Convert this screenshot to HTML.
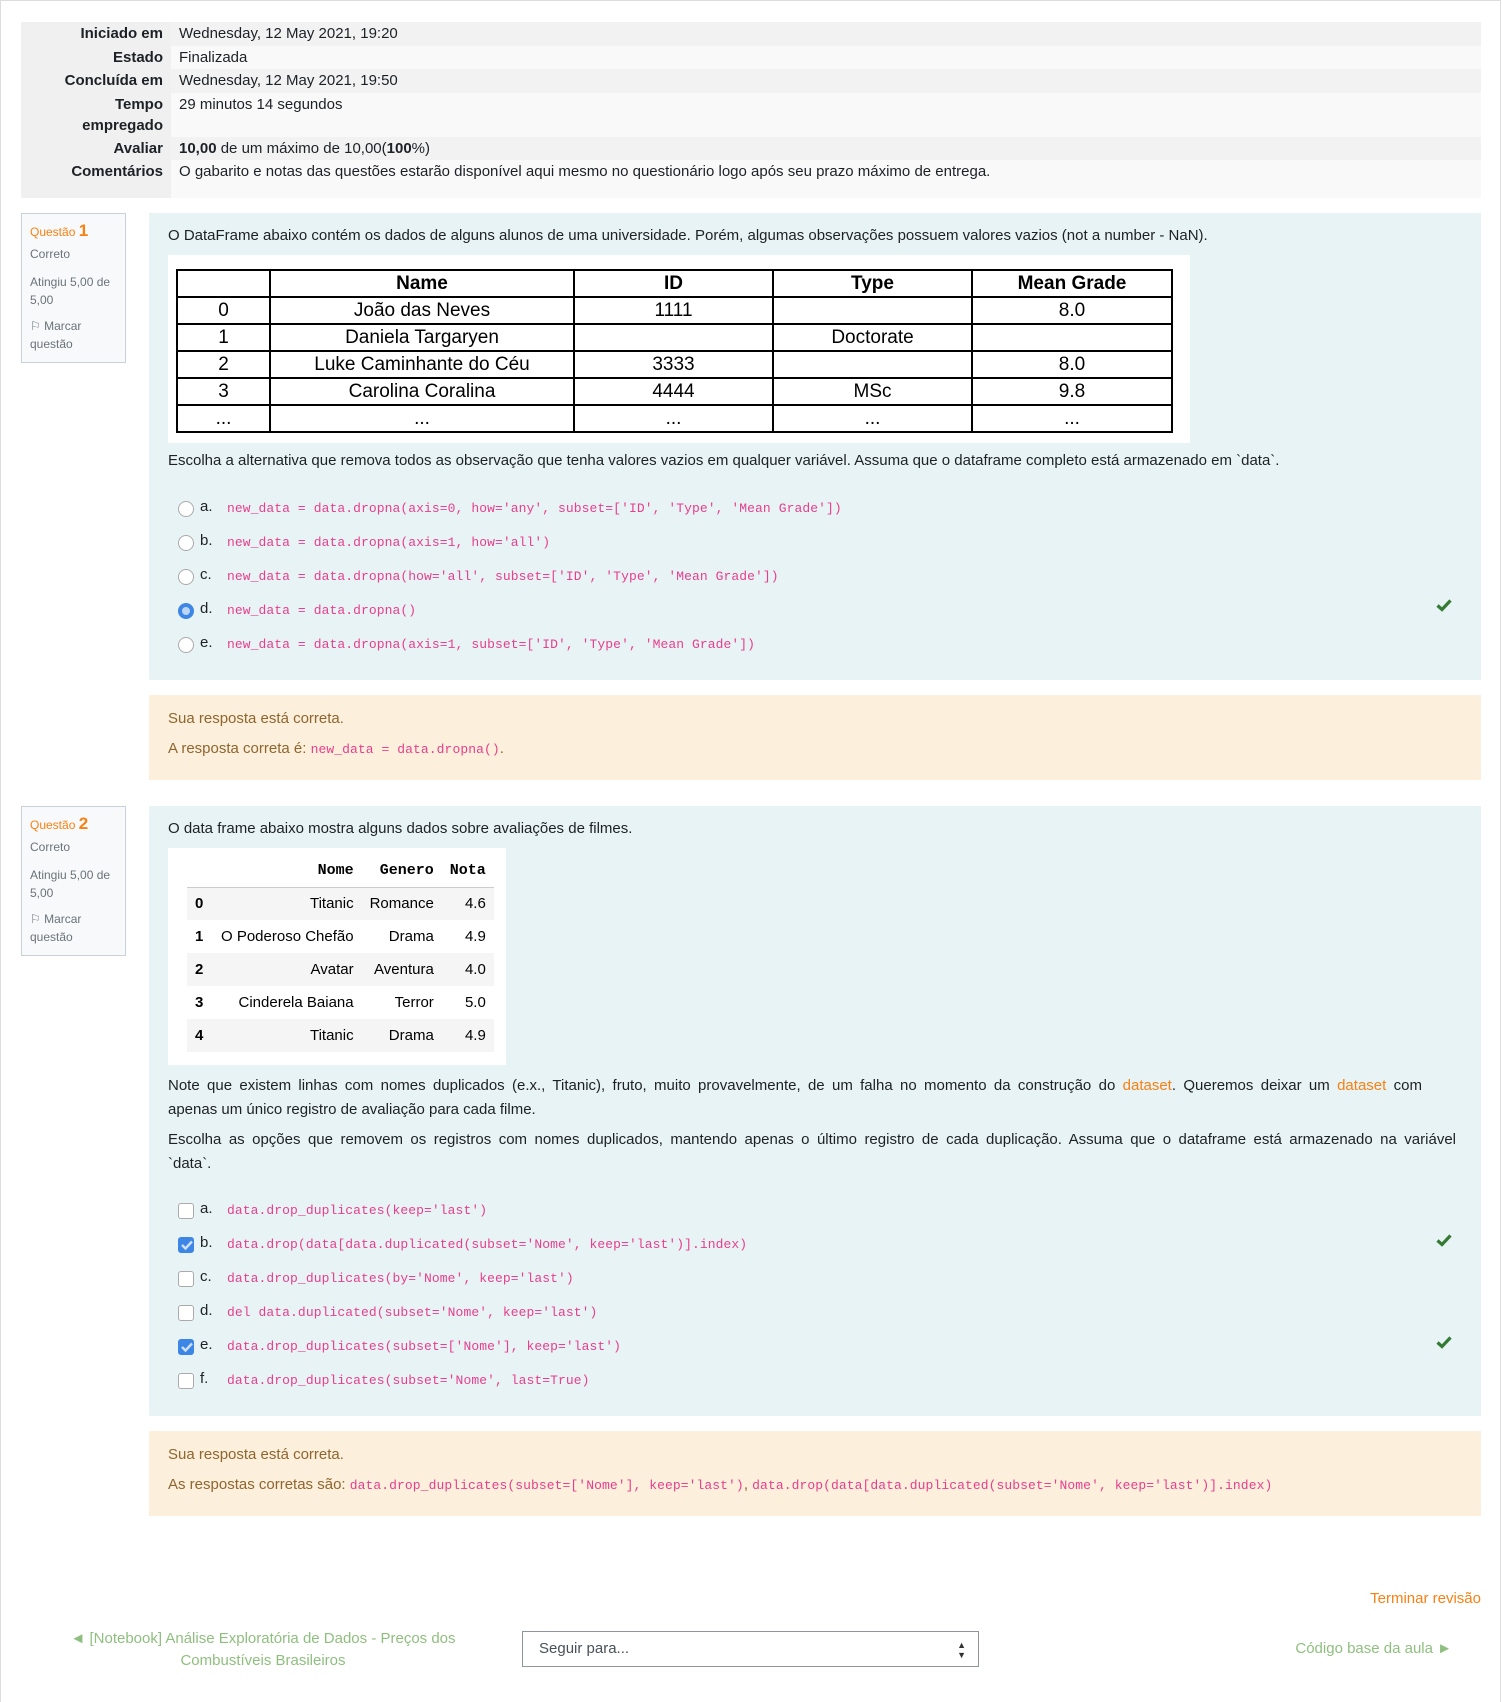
<!DOCTYPE html>
<html><head><meta charset="utf-8"><style>
*{box-sizing:border-box;margin:0;padding:0}
body{width:1502px;height:1702px;background:#fff;font-family:"Liberation Sans",sans-serif;font-size:15px;color:#1d2125;position:relative;overflow:hidden}
.frame{position:absolute;left:0;top:0;width:1501px;height:1702px;border:1px solid #ddd;border-bottom:none}
.abs{position:absolute}
table.sum{position:absolute;left:21px;top:22px;width:1460px;border-collapse:collapse}
table.sum th{width:150px;text-align:right;font-weight:bold;padding:1px 8px 0 0;vertical-align:top;background:#f0f0f0;line-height:21.5px}
table.sum td{padding:1px 8px;vertical-align:top;line-height:21.5px}
table.sum tr:nth-child(odd) td{background:#f2f2f2}
table.sum tr:nth-child(even) td{background:#f9f9f9}
.info{position:absolute;left:21px;width:105px;height:150px;background:#f8f9fa;border:1px solid #cad0d7;padding:8px 8px;font-size:12px;color:#6a737b;line-height:18px}
.info .q{color:#f98012;font-size:12px}
.info .q b{font-size:17px}
.content{position:absolute;left:149px;width:1332px;background:#e7f3f5}
.fb{position:absolute;left:149px;width:1332px;background:#fcefdc;color:#8e662e;padding:14px 19px}
.fb p{line-height:20px;margin-bottom:10px}
code,.code{font-family:"Liberation Mono",monospace;font-size:13px;color:#e83e8c;letter-spacing:0.08px}
.opt{position:absolute;left:176px;height:20px;line-height:20px}
.opt .r{position:absolute;left:2px;top:3px;width:16px;height:16px;border:1px solid #aaa;border-radius:50%;background:#fff}
.opt .r.on{border:4px solid #3e86e6;background:#bcd5f6}
.opt .c{position:absolute;left:2px;top:3px;width:16px;height:16px;border:1px solid #aaa;border-radius:3px;background:#fff}
.opt .c.on{background:#3e86e6;border-color:#3e86e6}
.opt .l{position:absolute;left:24px;top:-1px}
.opt .code{position:absolute;left:51px;top:1px;white-space:pre}
.tick{position:absolute;left:1436px}
table.df{border-collapse:collapse;position:absolute;left:176px;top:269px;font-size:19px;color:#000}
table.df td,table.df th{border:2px solid #000;text-align:center;height:27px;line-height:22px;padding:0}
table.pd{border-collapse:collapse;position:absolute;left:187px;top:855px;font-size:15px;color:#000}
table.pd th{font-family:"Liberation Mono",monospace;font-weight:bold;text-align:right;padding:0 8px;height:32px;border-bottom:1px solid #ccc}
table.pd td{text-align:right;padding:0 8px;height:33px}
table.pd td:first-child{text-align:left;font-weight:bold;width:26px}
table.pd tr:nth-child(even) td{background:#f5f5f5}
.just{text-align:justify;text-align-last:justify;white-space:nowrap}
</style></head><body>
<div class="frame"></div>
<table class="sum">
<tr><th>Iniciado em</th><td>Wednesday, 12 May 2021, 19:20</td></tr>
<tr><th>Estado</th><td>Finalizada</td></tr>
<tr><th>Concluída em</th><td>Wednesday, 12 May 2021, 19:50</td></tr>
<tr><th>Tempo<br>empregado</th><td>29 minutos 14 segundos</td></tr>
<tr><th>Avaliar</th><td><b>10,00</b> de um máximo de 10,00(<b>100</b>%)</td></tr>
<tr><th style="height:38px">Comentários</th><td>O gabarito e notas das questões estarão disponível aqui mesmo no questionário logo após seu prazo máximo de entrega.</td></tr>
</table>

<div class="info" style="top:213px"><div class="q">Questão <b>1</b></div><div style="margin-top:4px">Correto</div><div style="margin-top:10px">Atingiu 5,00 de 5,00</div><div style="margin-top:8px">⚐ Marcar questão</div></div>
<div class="content" style="top:213px;height:467px"></div>
<div class="abs" style="left:168px;top:227px">O DataFrame abaixo contém os dados de alguns alunos de uma universidade. Porém, algumas observações possuem valores vazios (not a number - NaN).</div>
<div class="abs" style="left:168px;top:255px;width:1022px;height:188px;background:#fff"></div>
<table class="df">
<tr><th style="width:93px"></th><th style="width:304px">Name</th><th style="width:199px">ID</th><th style="width:199px">Type</th><th style="width:200px">Mean Grade</th></tr>
<tr><td>0</td><td>João das Neves</td><td>1111</td><td></td><td>8.0</td></tr>
<tr><td>1</td><td>Daniela Targaryen</td><td></td><td>Doctorate</td><td></td></tr>
<tr><td>2</td><td>Luke Caminhante do Céu</td><td>3333</td><td></td><td>8.0</td></tr>
<tr><td>3</td><td>Carolina Coralina</td><td>4444</td><td>MSc</td><td>9.8</td></tr>
<tr><td>...</td><td>...</td><td>...</td><td>...</td><td>...</td></tr>
</table>
<div class="abs" style="left:168px;top:452px">Escolha a alternativa que remova todos as observação que tenha valores vazios em qualquer variável. Assuma que o dataframe completo está armazenado em `data`.</div>
<div class="opt" style="top:498px"><span class="r"></span><span class="l">a.</span><span class="code">new_data = data.dropna(axis=0, how='any', subset=['ID', 'Type', 'Mean Grade'])</span></div>
<div class="opt" style="top:532px"><span class="r"></span><span class="l">b.</span><span class="code">new_data = data.dropna(axis=1, how='all')</span></div>
<div class="opt" style="top:566px"><span class="r"></span><span class="l">c.</span><span class="code">new_data = data.dropna(how='all', subset=['ID', 'Type', 'Mean Grade'])</span></div>
<div class="opt" style="top:600px"><span class="r on"></span><span class="l">d.</span><span class="code">new_data = data.dropna()</span></div>
<div class="opt" style="top:634px"><span class="r"></span><span class="l">e.</span><span class="code">new_data = data.dropna(axis=1, subset=['ID', 'Type', 'Mean Grade'])</span></div>
<svg class="tick" style="top:598px" width="16" height="14" viewBox="0 0 16 14"><path d="M1.5 7.5L6 11.5L14.5 2.5" stroke="#357a32" stroke-width="3.2" fill="none"/></svg>
<div class="fb" style="top:695px;height:85px"><p>Sua resposta está correta.</p><p>A resposta correta é: <code>new_data = data.dropna()</code>.</p></div>

<div class="info" style="top:806px"><div class="q">Questão <b>2</b></div><div style="margin-top:4px">Correto</div><div style="margin-top:10px">Atingiu 5,00 de 5,00</div><div style="margin-top:8px">⚐ Marcar questão</div></div>
<div class="content" style="top:806px;height:610px"></div>
<div class="abs" style="left:168px;top:820px">O data frame abaixo mostra alguns dados sobre avaliações de filmes.</div>
<div class="abs" style="left:168px;top:848px;width:338px;height:217px;background:#fff"></div>
<table class="pd">
<tr><th></th><th>Nome</th><th>Genero</th><th>Nota</th></tr>
<tr><td>0</td><td>Titanic</td><td>Romance</td><td>4.6</td></tr>
<tr><td>1</td><td>O Poderoso Chefão</td><td>Drama</td><td>4.9</td></tr>
<tr><td>2</td><td>Avatar</td><td>Aventura</td><td>4.0</td></tr>
<tr><td>3</td><td>Cinderela Baiana</td><td>Terror</td><td>5.0</td></tr>
<tr><td>4</td><td>Titanic</td><td>Drama</td><td>4.9</td></tr>
</table>
<div class="abs" style="left:168px;top:1074px;line-height:24px"><div class="just" style="width:1254px">Note que existem linhas com nomes duplicados (e.x., Titanic), fruto, muito provavelmente, de um falha no momento da construção do <span style="color:#f98012">dataset</span>. Queremos deixar um <span style="color:#f98012">dataset</span> com</div><div>apenas um único registro de avaliação para cada filme.</div></div>
<div class="abs" style="left:168px;top:1128px;line-height:24px"><div class="just" style="width:1288px">Escolha as opções que removem os registros com nomes duplicados, mantendo apenas o último registro de cada duplicação. Assuma que o dataframe está armazenado na variável</div><div>`data`.</div></div>
<div class="opt" style="top:1200px"><span class="c"></span><span class="l">a.</span><span class="code">data.drop_duplicates(keep='last')</span></div>
<div class="opt" style="top:1234px"><span class="c on"></span><span class="l">b.</span><span class="code">data.drop(data[data.duplicated(subset='Nome', keep='last')].index)</span></div>
<div class="opt" style="top:1268px"><span class="c"></span><span class="l">c.</span><span class="code">data.drop_duplicates(by='Nome', keep='last')</span></div>
<div class="opt" style="top:1302px"><span class="c"></span><span class="l">d.</span><span class="code">del data.duplicated(subset='Nome', keep='last')</span></div>
<div class="opt" style="top:1336px"><span class="c on"></span><span class="l">e.</span><span class="code">data.drop_duplicates(subset=['Nome'], keep='last')</span></div>
<div class="opt" style="top:1370px"><span class="c"></span><span class="l">f.</span><span class="code">data.drop_duplicates(subset='Nome', last=True)</span></div>
<svg class="abs" style="left:180px;top:1239px" width="14" height="12"><path d="M2 6L5.5 9.5L12 2.5" stroke="#cfe0fa" stroke-width="2.4" fill="none"/></svg>
<svg class="abs" style="left:180px;top:1341px" width="14" height="12"><path d="M2 6L5.5 9.5L12 2.5" stroke="#cfe0fa" stroke-width="2.4" fill="none"/></svg>
<svg class="tick" style="top:1233px" width="16" height="14" viewBox="0 0 16 14"><path d="M1.5 7.5L6 11.5L14.5 2.5" stroke="#357a32" stroke-width="3.2" fill="none"/></svg>
<svg class="tick" style="top:1335px" width="16" height="14" viewBox="0 0 16 14"><path d="M1.5 7.5L6 11.5L14.5 2.5" stroke="#357a32" stroke-width="3.2" fill="none"/></svg>
<div class="fb" style="top:1431px;height:85px"><p>Sua resposta está correta.</p><p>As respostas corretas são: <code>data.drop_duplicates(subset=['Nome'], keep='last')</code>, <code>data.drop(data[data.duplicated(subset='Nome', keep='last')].index)</code></p></div>

<div class="abs" style="left:1300px;width:181px;text-align:right;top:1590px;color:#f98012">Terminar revisão</div>
<div class="abs" style="left:58px;width:410px;text-align:center;top:1628px;color:#8fbf7f;line-height:22px">◄ [Notebook] Análise Exploratória de Dados - Preços dos Combustíveis Brasileiros</div>
<div class="abs" style="left:522px;top:1631px;width:457px;height:36px;border:1px solid #8f959e;padding:0 16px;line-height:34px;color:#495057">Seguir para...<span style="position:absolute;right:12px;top:0;font-size:9px;line-height:10px;padding-top:8px;color:#333">▲<br>▼</span></div>
<div class="abs" style="left:1200px;width:252px;text-align:right;top:1640px;color:#8fbf7f">Código base da aula ►</div>
</body></html>
